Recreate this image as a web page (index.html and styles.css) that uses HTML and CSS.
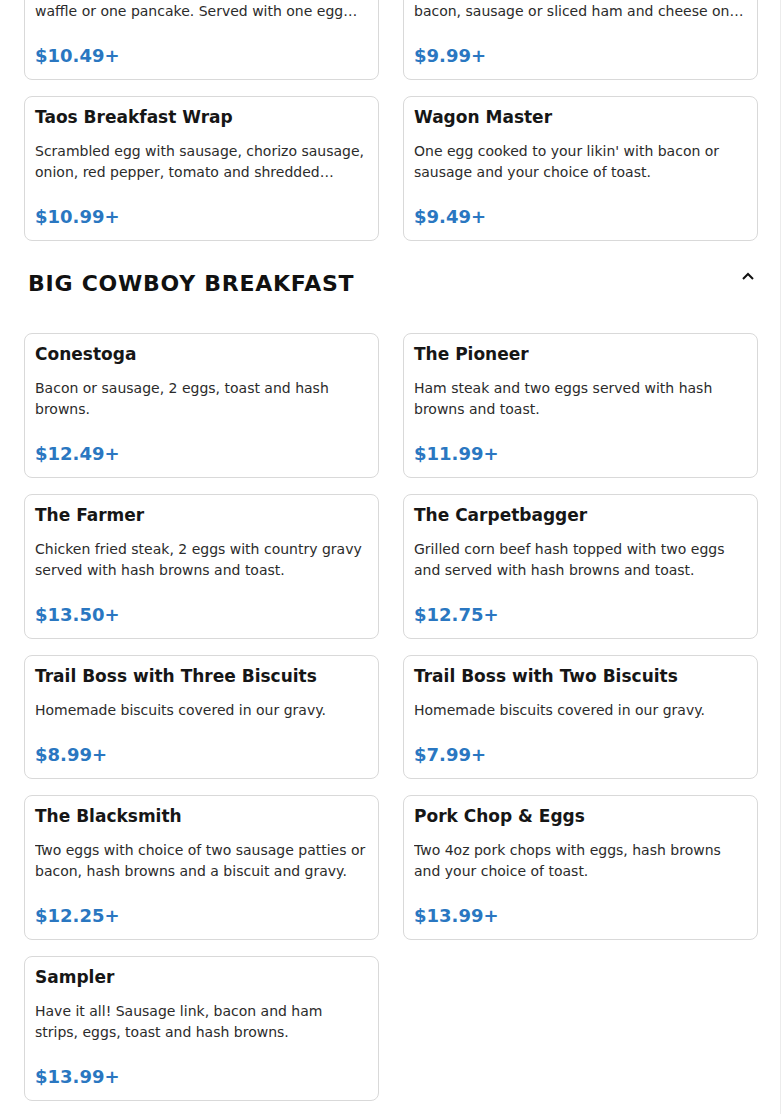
FILE: index.html
```html
<!DOCTYPE html>
<html lang="en">
<head>
<meta charset="utf-8">
<title>Menu</title>
<link rel="stylesheet" href="styles.css">
</head>
<body>
<div class="page">
  <section class="section section-scrolled">
    <div class="grid">
      <article class="card">
        <h3 class="card-title">Belgian Waffle Combo</h3>
        <p class="card-desc">Choice of bacon or sausage with one Belgian waffle or one pancake. Served with one egg any style.</p>
        <div class="card-price">$10.49+</div>
      </article>
      <article class="card">
        <h3 class="card-title">Breakfast Sandwich</h3>
        <p class="card-desc">One egg cooked to your likin' with choice of bacon, sausage or sliced ham and cheese on toast.</p>
        <div class="card-price">$9.99+</div>
      </article>
      <article class="card">
        <h3 class="card-title">Taos Breakfast Wrap</h3>
        <p class="card-desc">Scrambled egg with sausage, chorizo sausage, onion, red pepper, tomato and shredded cheese in a flour tortilla.</p>
        <div class="card-price">$10.99+</div>
      </article>
      <article class="card">
        <h3 class="card-title">Wagon Master</h3>
        <p class="card-desc">One egg cooked to your likin' with bacon or sausage and your choice of toast.</p>
        <div class="card-price">$9.49+</div>
      </article>
    </div>
  </section>

  <section class="section">
    <header class="section-head">
      <h2 class="section-title">BIG COWBOY BREAKFAST</h2>
      <button class="toggle" aria-label="Collapse">
        <svg width="14" height="10" viewBox="0 0 14 10"><path d="M2 8 L7 3 L12 8" fill="none" stroke="#111" stroke-width="2"/></svg>
      </button>
    </header>
    <div class="grid">
      <article class="card">
        <h3 class="card-title">Conestoga</h3>
        <p class="card-desc">Bacon or sausage, 2 eggs, toast and hash browns.</p>
        <div class="card-price">$12.49+</div>
      </article>
      <article class="card">
        <h3 class="card-title">The Pioneer</h3>
        <p class="card-desc">Ham steak and two eggs served with hash browns and toast.</p>
        <div class="card-price">$11.99+</div>
      </article>
      <article class="card">
        <h3 class="card-title">The Farmer</h3>
        <p class="card-desc">Chicken fried steak, 2 eggs with country gravy served with hash browns and toast.</p>
        <div class="card-price">$13.50+</div>
      </article>
      <article class="card">
        <h3 class="card-title">The Carpetbagger</h3>
        <p class="card-desc">Grilled corn beef hash topped with two eggs and served with hash browns and toast.</p>
        <div class="card-price">$12.75+</div>
      </article>
      <article class="card">
        <h3 class="card-title">Trail Boss with Three Biscuits</h3>
        <p class="card-desc">Homemade biscuits covered in our gravy.</p>
        <div class="card-price">$8.99+</div>
      </article>
      <article class="card">
        <h3 class="card-title">Trail Boss with Two Biscuits</h3>
        <p class="card-desc">Homemade biscuits covered in our gravy.</p>
        <div class="card-price">$7.99+</div>
      </article>
      <article class="card">
        <h3 class="card-title">The Blacksmith</h3>
        <p class="card-desc">Two eggs with choice of two sausage patties or bacon, hash browns and a biscuit and gravy.</p>
        <div class="card-price">$12.25+</div>
      </article>
      <article class="card">
        <h3 class="card-title">Pork Chop &amp; Eggs</h3>
        <p class="card-desc">Two 4oz pork chops with eggs, hash browns and your choice of toast.</p>
        <div class="card-price">$13.99+</div>
      </article>
      <article class="card">
        <h3 class="card-title">Sampler</h3>
        <p class="card-desc">Have it all! Sausage link, bacon and ham strips, eggs, toast and hash browns.</p>
        <div class="card-price">$13.99+</div>
      </article>
    </div>
  </section>
</div>
</body>
</html>
```

FILE: styles.css
```css
html, body {
  margin: 0;
  padding: 0;
  background: #ffffff;
}

body {
  font-family: "DejaVu Sans", "Noto Sans", sans-serif;
  color: #1a1a1a;
  overflow: hidden;
}

.page {
  width: 781px;
  border-right: 1px solid #ececec;
  padding: 0 24px 40px 24px;
  box-sizing: border-box;
  min-height: 1114px;
}

.section-scrolled {
  margin-top: -65px;
}

.grid {
  display: grid;
  grid-template-columns: 355px 355px;
  column-gap: 24px;
  row-gap: 16px;
  align-items: start;
}

.card {
  border: 1px solid #d9d9d9;
  border-radius: 8px;
  padding: 10px 10px 11px 10px;
  background: #fff;
}

.card-title {
  margin: 0;
  font-size: 17px;
  line-height: 20px;
  font-weight: bold;
  color: #161616;
}

.card-desc {
  margin: 14px 0 0 0;
  font-size: 14px;
  line-height: 21px;
  color: #2b2b2b;
  display: -webkit-box;
  -webkit-line-clamp: 2;
  -webkit-box-orient: vertical;
  overflow: hidden;
}

.card-price {
  margin-top: 22px;
  font-size: 18px;
  line-height: 24px;
  font-weight: bold;
  color: #2a77c1;
}

.section-head {
  display: flex;
  align-items: center;
  justify-content: space-between;
  padding: 0 0 0 4px;
  margin: 29px 0 35px 0;
}

.section-title {
  margin: 0;
  font-size: 22px;
  line-height: 28px;
  font-weight: bold;
  letter-spacing: 0.75px;
  color: #111;
}

.toggle {
  border: 0;
  background: transparent;
  padding: 0;
  width: 16px;
  height: 16px;
  display: flex;
  align-items: center;
  justify-content: center;
  margin-top: -17px;
}
```
